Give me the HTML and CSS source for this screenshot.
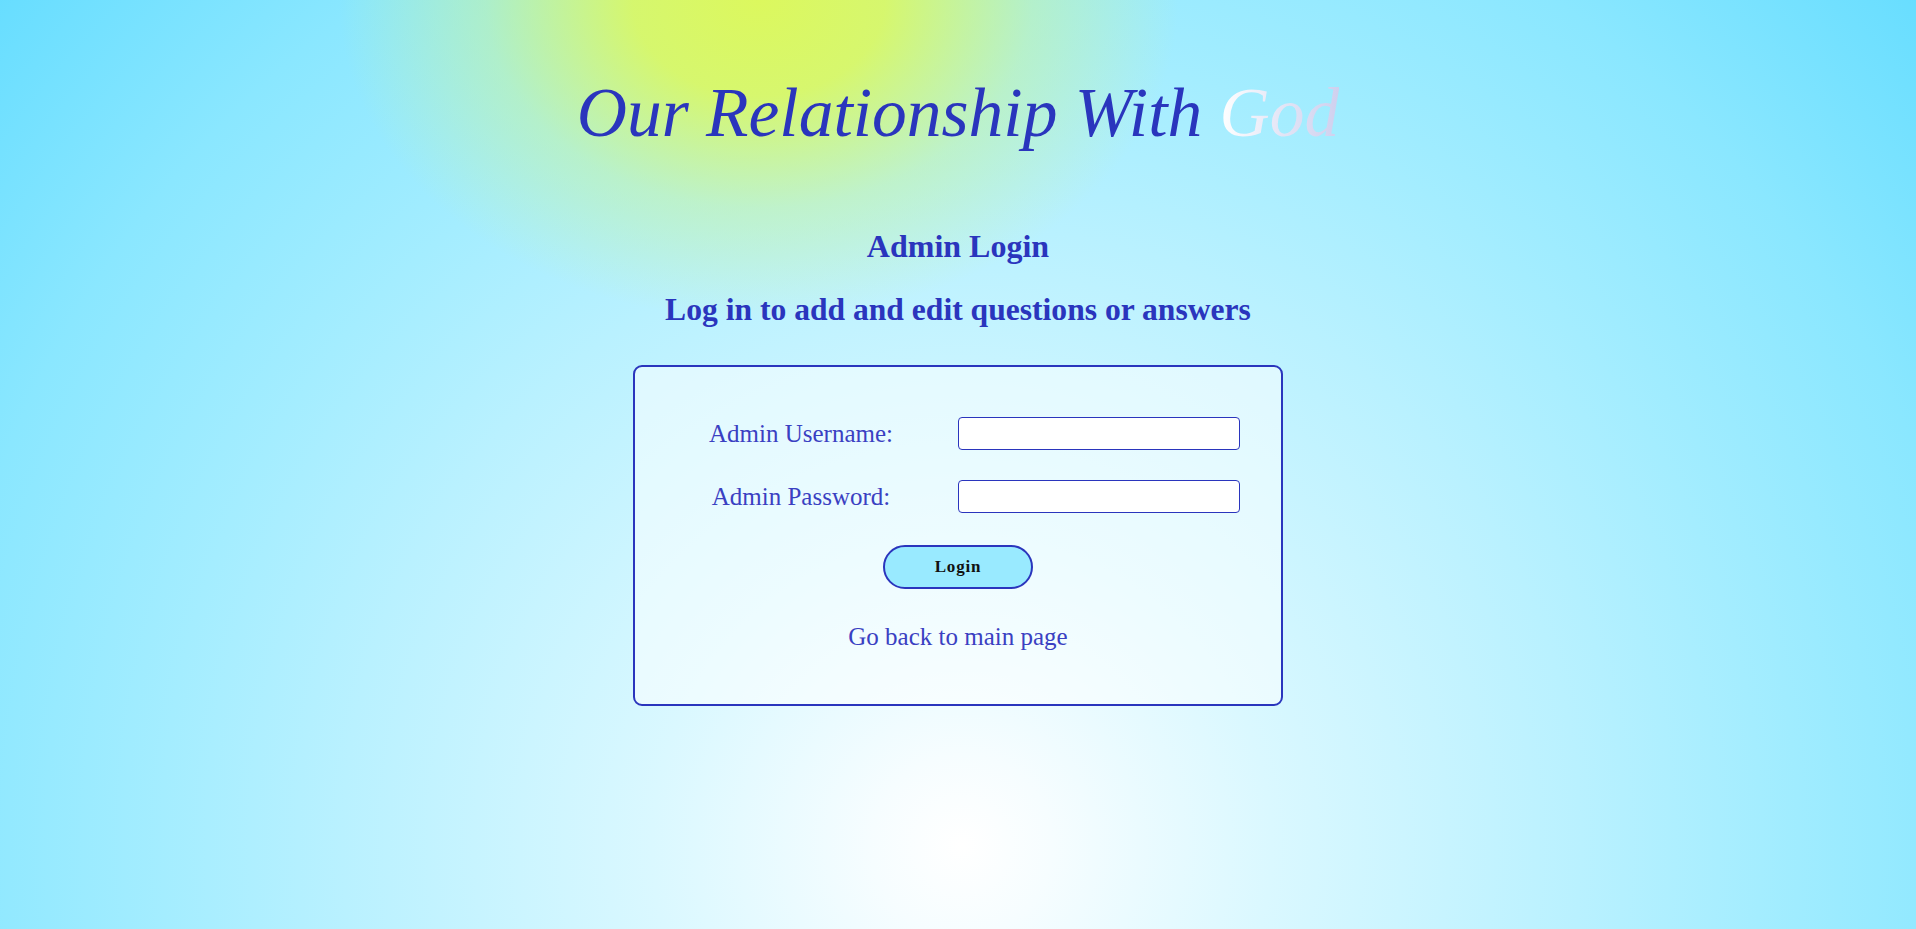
FILE: index.html
```html
<!DOCTYPE html>
<html lang="en">
<head>
<meta charset="utf-8">
<title>Admin Login - Our Relationship With God</title>
<link rel="stylesheet" href="styles.css">
</head>
<body>
<header class="site-header">
  <h1 class="site-title">Our Relationship With <span class="title-god">God</span></h1>
</header>
<main class="login-page">
  <h2 class="page-heading">Admin Login</h2>
  <h2 class="page-heading page-subheading">Log in to add and edit questions or answers</h2>
  <form class="login-card" onsubmit="return false;">
    <div class="login-fields">
      <label class="field-label" for="username">Admin Username:</label>
      <input class="field-input" type="text" id="username" name="username">
      <label class="field-label" for="password">Admin Password:</label>
      <input class="field-input" type="password" id="password" name="password">
    </div>
    <button class="login-button" type="submit">Login</button>
    <a class="back-link" href="#">Go back to main page</a>
  </form>
</main>
</body>
</html>
```
FILE: styles.css
```css
html, body {
  margin: 0;
  padding: 0;
  min-height: 100%;
}

body {
  height: 929px;
  font-family: "Liberation Serif", "Times New Roman", serif;
  color: #2a35bd;
  background:
    radial-gradient(ellipse 420px 320px at 39.6% 0%, rgba(220, 248, 94, 1) 0%, rgba(220, 248, 94, 0.9) 30%, rgba(205, 245, 140, 0.45) 65%, rgba(190, 242, 200, 0) 100%),
    radial-gradient(circle 1290px at 50.2% 91%, #ffffff 0%, #f6fdff 7%, #daf8ff 24%, #b9f1ff 48%, #a4edff 62%, #8ae7ff 80%, #66ddff 100%);
  overflow: hidden;
}

.site-header {
  display: flex;
  justify-content: center;
  padding-top: 78px;
}

.site-title {
  margin: 0;
  font-size: 69.5px;
  line-height: 69px;
  font-style: italic;
  font-weight: normal;
  color: #2a35bd;
}

.title-god {
  background: linear-gradient(90deg, #ffffff 0%, #e4e6f6 50%, #cfd0ee 100%);
  -webkit-background-clip: text;
  background-clip: text;
  color: transparent;
}

.login-page {
  display: flex;
  flex-direction: column;
  align-items: center;
  padding-top: 83px;
}

.page-heading {
  margin: 0;
  font-size: 32px;
  line-height: 32px;
  font-weight: bold;
  color: #2a35bd;
}

.page-subheading {
  margin-top: 32px;
  font-size: 31.6px;
}

.login-card {
  box-sizing: border-box;
  width: 650px;
  height: 341px;
  margin-top: 39px;
  padding: 50px 0 0;
  border: 2px solid #2a35bd;
  border-radius: 9px;
  background: rgba(255, 255, 255, 0.5);
  display: flex;
  flex-direction: column;
  align-items: center;
}

.login-fields {
  display: grid;
  grid-template-columns: 250px 282px;
  column-gap: 32px;
  row-gap: 30px;
  align-items: center;
}

.field-label {
  text-align: center;
  font-size: 25px;
  line-height: 30px;
  color: #3a40c2;
}

.field-input {
  box-sizing: border-box;
  width: 282px;
  height: 33px;
  margin: 0;
  border: 1px solid #2a35bd;
  border-radius: 4px;
  background: #ffffff;
  font-family: "Liberation Serif", serif;
  font-size: 18px;
  padding: 0 6px;
}

.login-button {
  box-sizing: border-box;
  width: 150px;
  height: 44px;
  margin-top: 32px;
  border: 2px solid #2a35bd;
  border-radius: 22px;
  background: #99eaff;
  color: #111111;
  font-family: "Liberation Serif", serif;
  font-size: 17px;
  font-weight: bold;
  letter-spacing: 0.8px;
  cursor: pointer;
}

.back-link {
  margin-top: 35px;
  font-size: 25px;
  line-height: 25px;
  color: #3a40c2;
  text-decoration: none;
}
```
